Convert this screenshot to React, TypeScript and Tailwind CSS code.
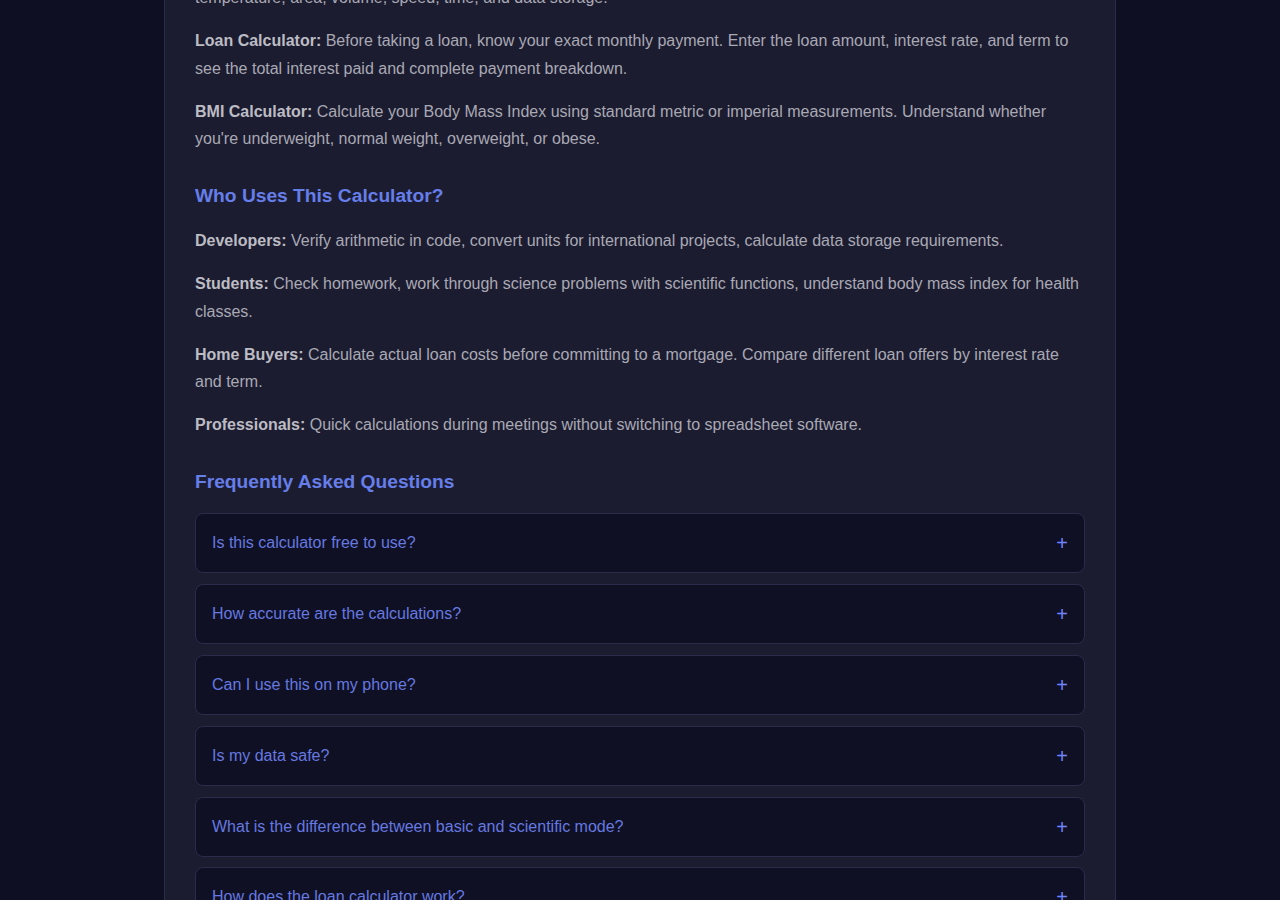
import { useState } from "react";

const FAQS = [
  "Is this calculator free to use?",
  "How accurate are the calculations?",
  "Can I use this on my phone?",
  "Is my data safe?",
  "What is the difference between basic and scientific mode?",
  "How does the loan calculator work?",
  "Does it work offline?",
];

function Para({ label, children }: { label: string; children: React.ReactNode }) {
  return (
    <p className="mb-4 text-base leading-[1.7] text-[#a9a9b4]">
      <strong className="font-bold text-[#bcbcc4]">{label}</strong> {children}
    </p>
  );
}

function FaqItem({ q }: { q: string }) {
  const [open, setOpen] = useState(false);
  return (
    <div className="rounded-lg border border-[#2b2b4c] bg-[#0f1024]">
      <button
        type="button"
        onClick={() => setOpen(!open)}
        className="flex w-full items-center justify-between px-4 py-[17px] text-left text-base leading-6 text-[#6679e0]"
      >
        <span>{q}</span>
        <span className="text-[20px] leading-none text-[#6f85ff]">{open ? "−" : "+"}</span>
      </button>
    </div>
  );
}

export default function App() {
  return (
    <div className="min-h-screen overflow-hidden bg-[#0f0f24] font-['Liberation_Sans',Arial,sans-serif]">
      <div className="mx-auto -mt-[43px] w-[952px] border-x border-[#2b2b4a] bg-[#1c1c30] px-[30px] pb-10">
        <Para label="Unit Converter:">
          Convert between units of length, weight,
          <br />
          temperature, area, volume, speed, time, and data storage.
        </Para>
        <Para label="Loan Calculator:">
          Before taking a loan, know your exact monthly payment. Enter the loan amount, interest rate, and term to
          see the total interest paid and complete payment breakdown.
        </Para>
        <Para label="BMI Calculator:">
          Calculate your Body Mass Index using standard metric or imperial measurements. Understand whether
          you're underweight, normal weight, overweight, or obese.
        </Para>

        <h3 className="mt-8 mb-5 text-[19.2px] font-bold leading-[1.2] text-[#667eea]">Who Uses This Calculator?</h3>
        <Para label="Developers:">
          Verify arithmetic in code, convert units for international projects, calculate data storage requirements.
        </Para>
        <Para label="Students:">
          Check homework, work through science problems with scientific functions, understand body mass index for health
          classes.
        </Para>
        <Para label="Home Buyers:">
          Calculate actual loan costs before committing to a mortgage. Compare different loan offers by interest rate
          and term.
        </Para>
        <Para label="Professionals:">
          Quick calculations during meetings without switching to spreadsheet software.
        </Para>

        <h3 className="mt-8 mb-5 text-[19.2px] font-bold leading-[1.2] text-[#667eea]">Frequently Asked Questions</h3>
        <div className="flex flex-col gap-[10.8px]">
          {FAQS.map((q) => (
            <FaqItem key={q} q={q} />
          ))}
        </div>
      </div>
    </div>
  );
}
